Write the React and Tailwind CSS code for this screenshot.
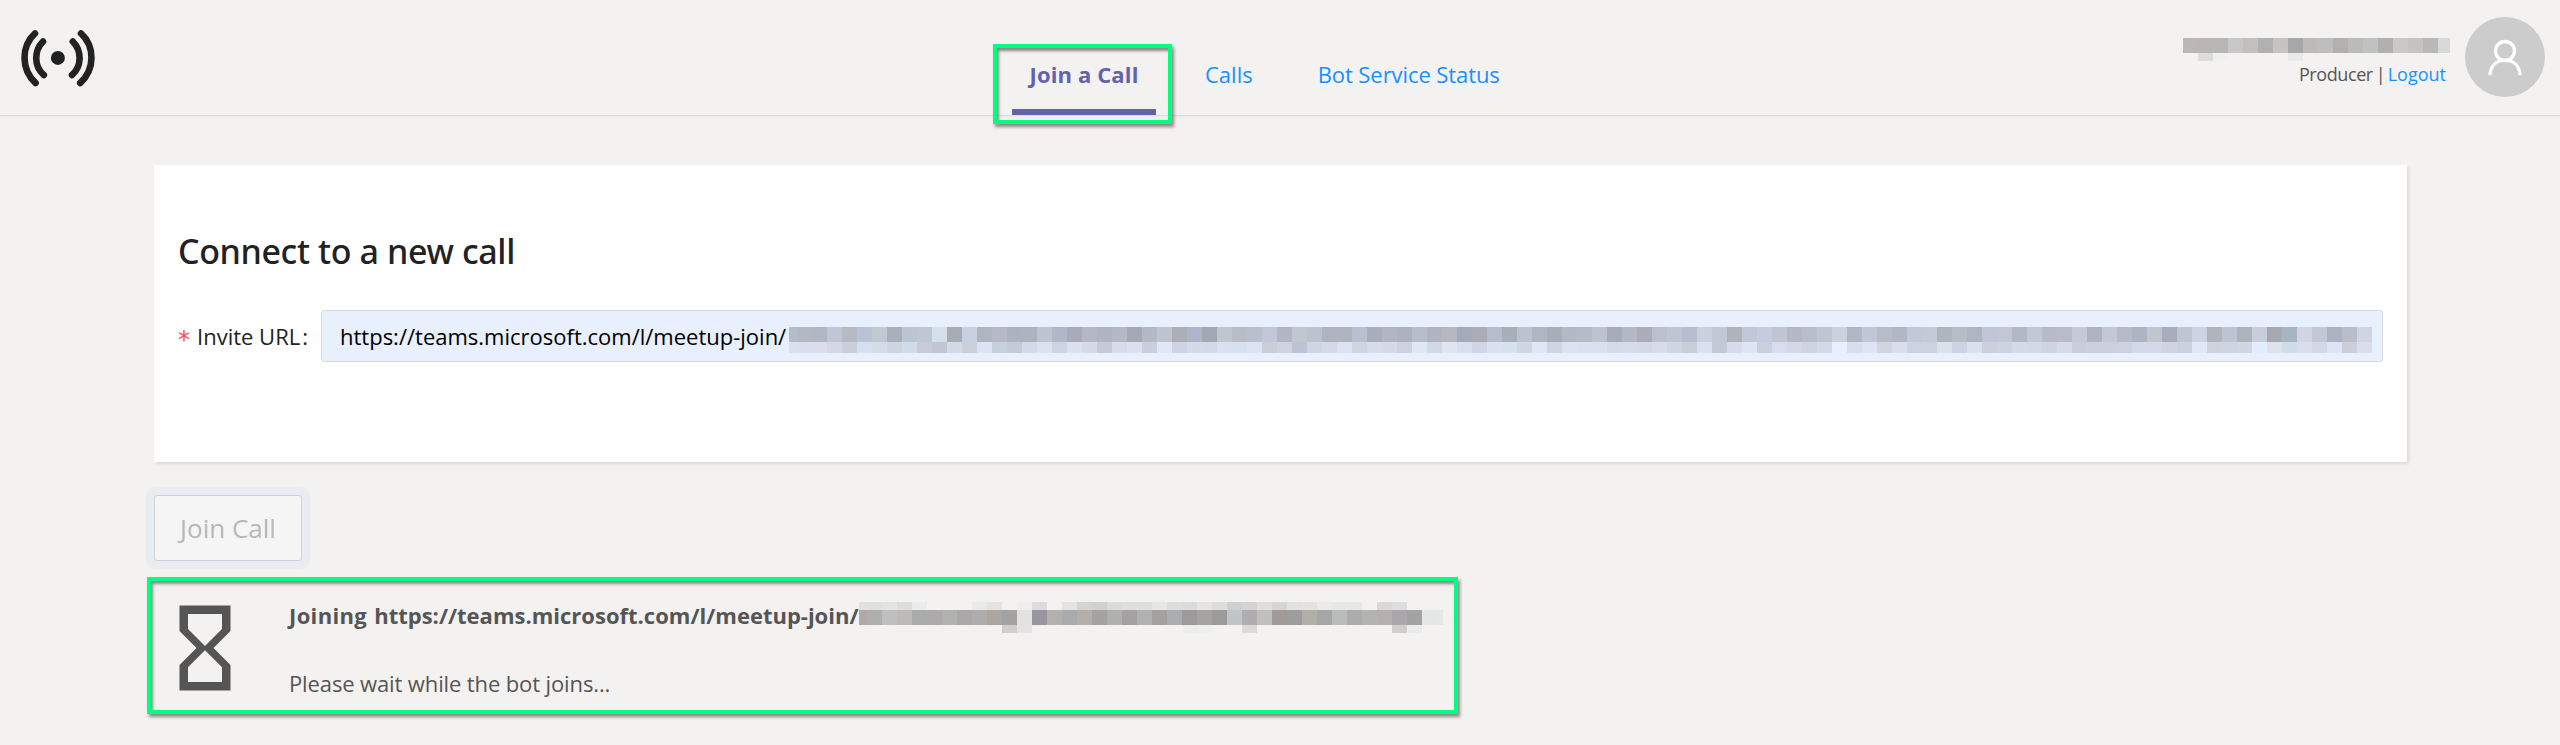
const HEADER_TOP =
  "b9b7b8 bbb6b3 b8b7b4 c7c7ca c1c0be b1b1b2 c7c3c0 a8a8aa bcbbb9 bdbebd b2b1af bbbcba bfc2c1 b1b0ae c9c9c9 c5c4bf bab9b7";
const HEADER_LOW = "- dddddb f0f0f1 - - - - e9e9e8 - - - - - - - - -";

const URL_TOP =
  "b3b8c1 b0b8c5 bfc7d6 b7bac3 b8c4d3 c0c8d2 abafbc bcc5d2 c0c7d4 d5dfe9 a9adb1 c7d1e2 aeb6c0 b6bac6 acb3c0 aeb4bf bec5cf b0b7c8 a9acb8 b4b7c4 afb4c1 b5b9c6 a5a9b5 b3bac5 bec5d0 adafb8 adb6c9 a2a9b2 bfc6d0 b7bec8 bac0cb c1c7d6 b2b6c2 c0c7d1 bcc3d0 b0b3c0 aeb5bf b9bed0 a8aeba b1b6c2 adb2bf b5bec9 b1b3c0 b6b8c0 a3aab9 acacb8 b6bdcd a8afb9 bcc2cf afb6c0 a7aeb8 b3bac6 b5bcc8 bdc4d0 a9abb8 b2b8c4 adadba bac0cd bfc5d2 b8bdd0 cad0dc c2c8d4 afb3bb c0c7d6 c4cddf c0c5d2 b5b9c6 b8bfcb bfc5d2 cbd2dc b1b7c5 c0c6d5 b5bdc6 b1b7c4 c2c8d8 c4cad6 afb5bf b6bdc7 b0b5c3 c0c6d8 c4c6d3 b1b9c6 c2c8d5 b8bac7 b8bcca c6cad7 b0b3c0 c2c8d5 b8bbc7 adb4c4 c1c5cc a8adbe bfc5d3 cdd3e2 b0b4bd bec4d3 adb4be c7cdda a7a8b0 a7b4c4 cfd5e2 c4c7d4 acb3c2 bbbdcb d0d5e2";
const URL_LOW =
  "d8deeb d9deea d2d8e6 cbcfdc d7e0f1 d4dce9 cfd4e1 d1dcea c8cbd7 c1c6d4 d5dae8 cbd0dc dae4f4 c8cfdc c5cad7 d3d9e8 dce2f0 ced4e1 dce1ee d5dae8 c6cad8 d6dcea dce1f1 c9cfdc e0e7f7 cfd4e2 d4dae9 d3d9e8 dbe1ef d7e1ed dce3f2 cacfdc cfd4e2 bfc4d4 d0d5e4 d4d9e8 dde3f2 d0d5e2 d7dce9 d5dae8 cdd2df dde8f4 d2d8e5 dfe5f2 d9dff0 d1d6e4 dae1f0 d7e1ed d0d6e3 e0e6f6 d0d5e3 dce2f0 dae0ef dbe0ee d6dbe9 d7dce9 d4d9e7 d7dcea d1d6e4 c9cedb dae0f0 c4c9d8 d6dbe9 dfe5f4 cad0dc d7dcee d4d9e7 cfd4e1 d4d9e8 e8effe d8deeb dee4f3 d0d5e1 d8deea cdd2e0 cdd2e0 dbe0ed cdd3e1 dae0ee cbd0de ced3e1 d5dae9 d4d9e8 ced4e2 d6dbea c9cedb cbd0de cbd0de cdd2e0 d4d9e8 d4d9e8 cfd4e1 ccd1df e2e7f7 ced3e0 cfd4e1 d1d6e4 e3edff dde2ec d2dce9 d8deec d3d8e6 dde5f4 cbcfdc d9deec";

const JOIN_TOP =
  "e0e0de e4e4e3 dddddb ebebeb - - - eaeae9 e4e4e4 - f0efee dcdcde - e4e4e2 d4d4d2 d1d1cf dbdbda dfdfde dfdfde e6e6e4 dddddb dbdbdb e5e4e2 dddddc cfcfcf d3d3d4 dfdedd d6d6d4 e1e1df e4e3e0 eaeae9 e7e7e5 e7e7e5 - d9d8d6 dededf - -";
const JOIN_MID =
  "b0afad bfbfbf bcbbb9 a9aaaa acaaab afb2ae aaa8aa adadad aca6a3 a4a3a1 e2e2e2 9897a0 b2b1ad a9abad b2afac a4a39f b0b0ad a4a1a2 b0b1b0 a3a2a0 abadb0 9d9a9b a5a4a1 9d9b99 c1c5c8 afadaf c0bfbb a09b99 9d9c9f b0afa9 a6a6a4 b9bbbd acacad b3b3b1 b5b0ae a9a7aa a2a3a4 e4e7e5";
const JOIN_LOW =
  "- - - - - - - - - cfcecc e3e3e3 - - - - - - - - - - ededec efefee - - dad9d7 - - - - - - - - - d0cfcd ebebeb -";

function Cell({ color, className = "w-[15px]" }) {
  return (
    <span
      className={`block h-full shrink-0 ${className}`}
      style={{ backgroundColor: color === "-" ? "transparent" : `#${color}` }}
    />
  );
}

function MaskRow({ cells, height, first, last, firstWidth = "w-2", lastWidth = "w-3" }) {
  return (
    <div className={`flex ${height}`}>
      {first && <Cell color={first} className={firstWidth} />}
      {cells.split(" ").map((color, i) => (
        <Cell key={i} color={color} />
      ))}
      {last && <Cell color={last} className={lastWidth} />}
    </div>
  );
}

function Logo() {
  return (
    <svg className="mt-[26px] ml-[18px] h-16 w-20" viewBox="18 26 80 64" fill="none" stroke="#222" strokeWidth="6.6" strokeLinecap="round">
      <path d="M35 33.400C20.900 46.500 20.900 69.500 35.600 83" />
      <path d="M43 41.500C33.800 51 33.800 66 43.800 75" />
      <path d="M72.800 41.500C82 51 82 66 72 75" />
      <path d="M81 33.400C95.100 46.500 95.100 69.500 80.200 83" />
      <circle cx="57.900" cy="57.900" r="7" fill="#222" stroke="none" />
    </svg>
  );
}

function Avatar() {
  return (
    <div className="mt-[17px] h-20 w-20 rounded-full bg-[#ccc]">
      <svg className="h-20 w-20" viewBox="0 0 80 80" fill="none" stroke="#fff" strokeWidth="3.300">
        <circle cx="40" cy="34" r="9.500" />
        <path d="M24.800 58C25.600 48.500 31.500 43.300 40 43.300S54.400 48.500 55.200 58" />
      </svg>
    </div>
  );
}

function Header() {
  return (
    <header className="flex h-[116px] border-b border-[#dcdcdb] bg-[#f3f2f1] shadow-[0_1px_4px_rgba(0,0,0,0.04)]">
      <Logo />
      <nav className="ml-[914px] flex text-[22px] leading-6">
        <div className="relative flex w-36 justify-center border-b-[6px] border-[#6264a7] pt-[62px] font-bold tracking-[0.130px] text-[#6264a7]">
          Join a Call
          <div className="absolute top-[44px] -left-[19px] h-20 w-[179px] border-4 border-[#00ff80] shadow-[2px_3px_3px_rgba(60,50,50,0.55),inset_2px_3px_3px_rgba(60,50,50,0.55)]" />
        </div>
        <a className="ml-[49px] pt-[62px] text-[#1890ff]">Calls</a>
        <a className="ml-[65px] pt-[62px] tracking-[-0.080px] text-[#1890ff]">Bot Service Status</a>
      </nav>
      <div className="mr-[15px] ml-auto flex">
        <div className="mr-[15px] w-[267px] pt-[38px]">
          <MaskRow cells={HEADER_TOP} height="h-[15px]" last="d7dad8" />
          <MaskRow cells={HEADER_LOW} height="h-2" />
          <div className="flex pt-px pr-[4px] text-[18px] leading-6 text-[#555]">
            <span className="ml-auto tracking-[-0.400px]">Producer</span>
            <span className="mr-0 ml-[3px]">|</span>
            <a className="ml-[2px] text-[#1890ff]">Logout</a>
          </div>
        </div>
        <Avatar />
      </div>
    </header>
  );
}

function InviteCard() {
  return (
    <section className="mt-[49px] mr-[153px] ml-[154px] h-[297px] bg-white px-6 pt-[66px] shadow-[2px_2px_3px_rgba(0,0,0,0.1)]">
      <h2 className="h-10 font-['Noto_Sans'] text-[34px] leading-10 font-medium tracking-[-0.380px] text-[#222]">
        Connect to a new call
      </h2>
      <div className="mt-[39px] flex items-center text-[22px]">
        <span className="w-[17px] pt-[7px] font-['DejaVu_Sans'] text-[24px] leading-6 text-[#ff4d4f]">*</span>
        <label className="w-[126px] text-[#222]">
          <span className="ml-[2px]">Invite URL</span>
          <span className="ml-[2px]">:</span>
        </label>
        <div className="flex h-[52px] grow rounded-[3px] border border-[#d6d7d9] bg-[#e8effd] pl-[18px] text-black">
          <span className="w-[449px] shrink-0 pt-[13px] leading-6 whitespace-nowrap">
            https://teams.microsoft.com/l/meetup-join/
          </span>
          <div className="pt-4">
            <MaskRow cells={URL_TOP} height="h-[15px]" first="b3bdc8" />
            <MaskRow cells={URL_LOW} height="h-[11px]" first="d9e0ee" />
          </div>
        </div>
      </div>
    </section>
  );
}

function JoinStatus() {
  return (
    <section className="mt-4 ml-[147px] flex h-[137px] w-[1311px] border-4 border-[#00ff80] shadow-[2px_3px_3px_rgba(60,50,50,0.55),inset_2px_3px_3px_rgba(60,50,50,0.55)]">
      <svg className="mt-[16px] ml-[3px] h-[102px] w-[102px] shrink-0" viewBox="0 0 24 24" fill="#555">
        <path d="M6 2v6h.01L6 8.010 10 12l-4 4 .01.01H6V22h12v-5.990h-.01L18 16l-4-4 4-3.990-.01-.01H18V2H6zm10 14.500V20H8v-3.500l4-4 4 4zm-4-5l-4-4V4h8v3.500l-4 4z" />
      </svg>
      <div className="ml-[33px] text-[22px] leading-6 text-[#555]">
        <div className="flex pt-[21px]">
          <span className="w-[570px] pt-[1px] font-bold whitespace-nowrap">
            <span className="mr-px tracking-[0.350px]">Joining </span>
            https://teams.microsoft.com/l/meetup-join/
          </span>
          <div className="h-[31px]">
            <MaskRow cells={JOIN_TOP} height="h-2" first="e0e0df" />
            <MaskRow cells={JOIN_MID} height="h-[15px]" first="b0a9a9" last="e6e8e6" lastWidth="w-[6px]" />
            <MaskRow cells={JOIN_LOW} height="h-2" first="-" />
          </div>
        </div>
        <p className="mt-[38px] tracking-[-0.120px]">Please wait while the bot joins...</p>
      </div>
    </section>
  );
}

export default function App() {
  return (
    <div className="flow-root h-[745px] w-[2560px] overflow-hidden bg-[#f3f2f0] font-['Open_Sans','Noto_Sans',sans-serif]">
      <Header />
      <InviteCard />
      <button className="mt-[33px] ml-[154px] block h-[66px] w-[148px] rounded-[3px] border border-[#ced3da] bg-[#f5f5f5] pt-px text-[26px] text-[#b8b8b8] shadow-[0_0_0_8px_#e9edf1]">
        Join Call
      </button>
      <JoinStatus />
    </div>
  );
}
